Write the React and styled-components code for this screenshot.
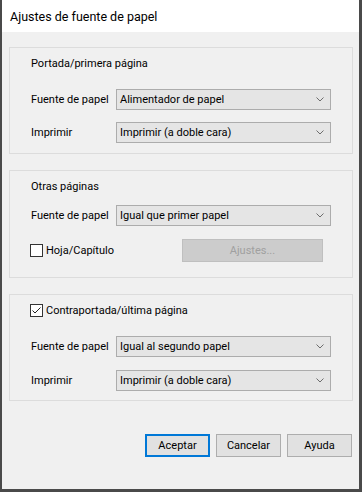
import React from "react";
import styled, { createGlobalStyle } from "styled-components";

const GlobalStyle = createGlobalStyle`
  html, body {
    margin: 0;
    padding: 0;
    background: #ffffff;
  }
  body {
    font-family: Roboto, "Noto Sans", sans-serif;
    font-size: 11px;
    color: #000;
  }
`;

const Window = styled.div`
  width: 362px;
  height: 492px;
  box-sizing: border-box;
  border-left: 2px solid #4a4a4a;
  border-right: 3px solid #4a4a4a;
  border-bottom: 3px solid #4a4a4a;
  display: flex;
  flex-direction: column;
  background: #f0f0f0;
`;

const TitleBar = styled.div`
  height: 32px;
  flex: none;
  background: #ffffff;
  display: flex;
  align-items: center;
  padding-left: 8px;
  font-size: 12.5px;
  color: #000;
`;

const Body = styled.div`
  flex: 1;
  display: flex;
  flex-direction: column;
  padding: 15px 6px 0 7px;
  gap: 16px;
`;

const Group = styled.div`
  border: 1px solid #dcdcdc;
  height: ${p => p.$h}px;
  box-sizing: border-box;
  padding: ${p => p.$pt}px 21px 0 21px;
  display: flex;
  flex-direction: column;
`;

const Heading = styled.div`
  height: 16px;
  line-height: 16px;
`;

const Row = styled.div`
  display: flex;
  align-items: center;
  height: ${p => p.$h || 21}px;
  margin-top: ${p => p.$mt || 0}px;
`;

const Label = styled.span`
  width: 85px;
  flex: none;
  white-space: nowrap;
`;

const Select = styled.div`
  flex: 1;
  height: 21px;
  box-sizing: border-box;
  border: 1px solid #acacac;
  background: #e5e5e5;
  display: flex;
  align-items: center;
  justify-content: space-between;
  padding: 0 6px 0 3px;
  white-space: nowrap;
`;

const Chevron = () => (
  <svg width="8" height="5" viewBox="0 0 8 5">
    <path d="M0.5 0.5 L4 4 L7.5 0.5" fill="none" stroke="#6d6d6d" strokeWidth="1" />
  </svg>
);

const CheckLabel = styled.label`
  display: flex;
  align-items: center;
  gap: 3px;
  height: 16px;
  margin-left: -1px;
  white-space: nowrap;
`;

const Box = styled.span`
  width: 13px;
  height: 13px;
  box-sizing: border-box;
  border: 1px solid #333333;
  background: #ffffff;
  display: flex;
  align-items: center;
  justify-content: center;
`;

const Check = ({ checked }) => (
  <Box>
    {checked && (
      <svg width="11" height="11" viewBox="0 0 11 11">
        <path d="M1.5 5.5 L4 8 L9.5 2.5" fill="none" stroke="#222" strokeWidth="1" />
      </svg>
    )}
  </Box>
);

const SpreadRow = styled(Row)`
  justify-content: space-between;
  padding-right: 8px;
`;

const DisabledButton = styled.div`
  width: 141px;
  height: 23px;
  box-sizing: border-box;
  background: #cccccc;
  border: 1px solid #bfbfbf;
  color: #a0a0a0;
  display: flex;
  align-items: center;
  justify-content: center;
`;

const Footer = styled.div`
  display: flex;
  justify-content: flex-end;
  gap: 6px;
  margin-top: 17px;
  padding-right: 1px;
`;

const Button = styled.div`
  width: 65px;
  height: 23px;
  box-sizing: border-box;
  background: #e1e1e1;
  border: ${p => (p.$default ? "2px solid #0078d7" : "1px solid #adadad")};
  display: flex;
  align-items: center;
  justify-content: center;
`;

export default function App() {
  return (
    <>
      <GlobalStyle />
      <Window>
        <TitleBar>Ajustes de fuente de papel</TitleBar>
        <Body>
          <Group $h={107} $pt={8}>
            <Heading>Portada/primera página</Heading>
            <Row $mt={17}>
              <Label>Fuente de papel</Label>
              <Select>Alimentador de papel<Chevron /></Select>
            </Row>
            <Row $mt={12}>
              <Label>Imprimir</Label>
              <Select>Imprimir (a doble cara)<Chevron /></Select>
            </Row>
          </Group>

          <Group $h={108} $pt={8}>
            <Heading>Otras páginas</Heading>
            <Row $mt={10}>
              <Label>Fuente de papel</Label>
              <Select>Igual que primer papel<Chevron /></Select>
            </Row>
            <SpreadRow $mt={13} $h={23}>
              <CheckLabel>
                <Check />
                Hoja/Capítulo
              </CheckLabel>
              <DisabledButton>Ajustes...</DisabledButton>
            </SpreadRow>
          </Group>

          <Group $h={107} $pt={7}>
            <CheckLabel>
              <Check checked />
              Contraportada/última página
            </CheckLabel>
            <Row $mt={18}>
              <Label>Fuente de papel</Label>
              <Select>Igual al segundo papel<Chevron /></Select>
            </Row>
            <Row $mt={13}>
              <Label>Imprimir</Label>
              <Select>Imprimir (a doble cara)<Chevron /></Select>
            </Row>
          </Group>

          <Footer>
            <Button $default>Aceptar</Button>
            <Button>Cancelar</Button>
            <Button>Ayuda</Button>
          </Footer>
        </Body>
      </Window>
    </>
  );
}
